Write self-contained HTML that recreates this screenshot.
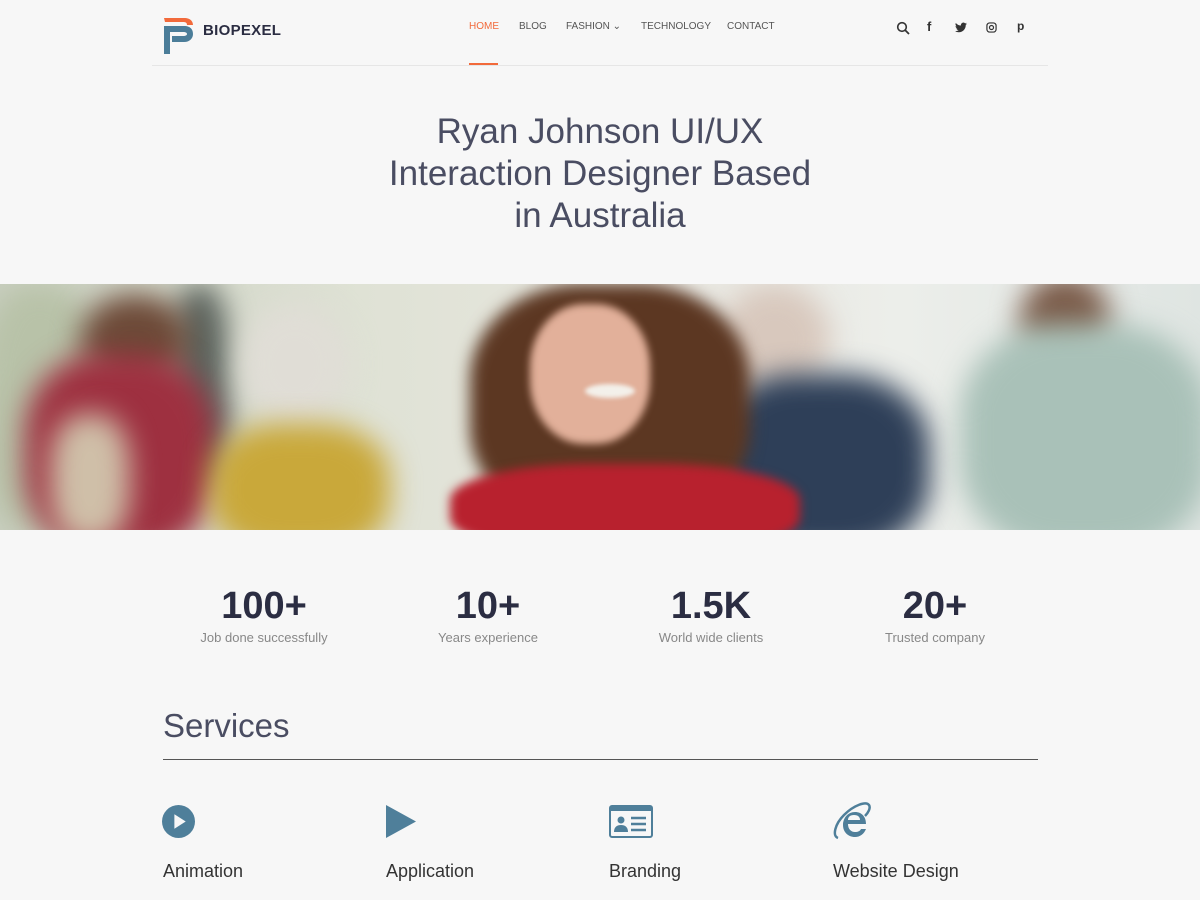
<!DOCTYPE html>
<html><head><meta charset="utf-8"><style>
*{margin:0;padding:0;box-sizing:border-box}
body{width:1200px;height:900px;background:#f7f7f7;font-family:"Liberation Sans",sans-serif;overflow:hidden;position:relative;color:#2b2d42}
.abs{position:absolute}
nav a{position:absolute;top:21px;font-size:10px;color:#555;text-decoration:none}
.hero{left:0;top:284px;width:1200px;height:246px;overflow:hidden;background:linear-gradient(90deg,#c9cfc0 0%,#dfe2d5 30%,#e8e6df 55%,#eceeea 75%,#dfe5e2 100%)}
.b{position:absolute;filter:blur(14px);border-radius:40%}
.stat{position:absolute;top:585px;width:220px;text-align:center}
.stat b{display:block;font-size:38px;color:#2b2d42;font-weight:bold}
.stat span{display:block;font-size:13px;color:#888;margin-top:2px}
.svc{position:absolute;top:861px;font-size:18px;color:#333}
</style></head><body>
<svg class="abs" style="left:162px;top:16px" width="34" height="38" viewBox="0 0 34 38"><path d="M2 2h20c7 0 9 4 9 7h-6c0-2-1-3-4-3H3z" fill="#f26a3b"/><path d="M2 10h20c7 0 9 4 9 8s-3 8-9 8h-12v-6h11c3 0 4-1 4-2s-1-2-4-2H8v22l-6 2z" fill="#4b7d99"/></svg>
<div class="abs" style="left:203px;top:22px;font-size:15px;font-weight:bold;color:#2b2d42;letter-spacing:.3px">BIOPEXEL</div>
<nav>
<a style="left:469px;color:#f26a3b">HOME</a>
<a style="left:519px">BLOG</a>
<a style="left:566px">FASHION ⌄</a>
<a style="left:641px">TECHNOLOGY</a>
<a style="left:727px">CONTACT</a>
</nav>
<div class="abs" style="left:469px;top:63px;width:29px;height:2px;background:#f26a3b"></div>
<div class="abs" style="left:152px;top:65px;width:896px;height:1px;background:#e6e6e6"></div>
<svg class="abs" style="left:896px;top:21px" width="14" height="14" viewBox="0 0 14 14"><circle cx="6" cy="6" r="4.3" stroke="#333" stroke-width="1.6" fill="none"/><path d="M9 9l4 4" stroke="#333" stroke-width="1.8"/></svg>
<div class="abs" style="left:927px;top:19px;font-size:13px;font-weight:bold;color:#333">f</div>
<svg class="abs" style="left:955px;top:22px" width="12" height="11" viewBox="0 0 24 20"><path d="M24 2.4c-.9.4-1.8.7-2.8.8 1-.6 1.8-1.6 2.2-2.7-1 .6-2 1-3.1 1.2A4.9 4.9 0 0 0 11.9 6 14 14 0 0 1 1.7.9a4.9 4.9 0 0 0 1.5 6.6c-.8 0-1.600-.3-2.2-.6 0 2.4 1.7 4.4 3.9 4.8-.7.2-1.5.2-2.2.1.6 2 2.4 3.4 4.6 3.4A9.9 9.9 0 0 1 0 17.2 14 14 0 0 0 7.5 19.4c9.1 0 14-7.5 14-14v-.6c1-.7 1.8-1.6 2.5-2.4z" fill="#333"/></svg>
<svg class="abs" style="left:986px;top:22px" width="11" height="11" viewBox="0 0 12 12"><rect x="1" y="1" width="10" height="10" rx="3" stroke="#333" stroke-width="1.3" fill="none"/><circle cx="6" cy="6" r="2.2" stroke="#333" stroke-width="1.3" fill="none"/></svg>
<div class="abs" style="left:1017px;top:19px;font-size:12px;font-weight:bold;color:#333">p</div>
<div class="abs" style="left:300px;top:111px;width:600px;text-align:center;font-size:35px;line-height:42px;color:#4a4d62">Ryan Johnson UI/UX<br>Interaction Designer Based<br>in Australia</div>
<div class="abs hero">
<div class="b" style="left:-20px;top:0;width:120px;height:246px;background:#b8c2a8"></div>
<div class="b" style="left:170px;top:0;width:60px;height:200px;background:#5e6660"></div>
<div class="b" style="left:80px;top:10px;width:110px;height:90px;background:#6d4a38;border-radius:50%"></div>
<div class="b" style="left:25px;top:70px;width:190px;height:200px;background:#9e3040"></div>
<div class="b" style="left:50px;top:130px;width:80px;height:130px;background:#cfbfa8"></div>
<div class="b" style="left:240px;top:20px;width:110px;height:120px;background:#e0ddd6;border-radius:50%"></div>
<div class="b" style="left:210px;top:140px;width:180px;height:130px;background:#c9a83a"></div>
<div class="b" style="left:720px;top:0;width:110px;height:110px;background:#d8c8bd;border-radius:50%"></div>
<div class="b" style="left:710px;top:90px;width:220px;height:180px;background:#2e3f58"></div>
<div class="b" style="left:1020px;top:-10px;width:90px;height:90px;background:#7a5a48;border-radius:50%"></div>
<div class="b" style="left:960px;top:40px;width:250px;height:230px;background:#a9c1b8"></div>
<div class="b" style="left:470px;top:0;width:280px;height:240px;background:#5c3722;filter:blur(8px)"></div>
<div class="b" style="left:530px;top:20px;width:120px;height:140px;background:#e2b09a;border-radius:45%;filter:blur(4px)"></div>
<div class="b" style="left:585px;top:100px;width:50px;height:14px;background:#f3f0ea;border-radius:50%;filter:blur(2px)"></div>
<div class="b" style="left:450px;top:180px;width:350px;height:90px;background:#b8212e;filter:blur(5px)"></div>
</div>
<div class="stat" style="left:154px"><b>100+</b><span>Job done successfully</span></div>
<div class="stat" style="left:378px"><b>10+</b><span>Years experience</span></div>
<div class="stat" style="left:601px"><b>1.5K</b><span>World wide clients</span></div>
<div class="stat" style="left:825px"><b>20+</b><span>Trusted company</span></div>
<div class="abs" style="left:163px;top:707px;font-size:33px;color:#4a4d62">Services</div>
<div class="abs" style="left:163px;top:759px;width:875px;height:1px;background:#555"></div>
<svg class="abs" style="left:162px;top:805px" width="33" height="33" viewBox="0 0 32 32"><circle cx="16" cy="16" r="16" fill="#4f7f9a"/><path d="M12 9l11 7-11 7z" fill="#f7f7f7"/></svg>
<svg class="abs" style="left:386px;top:805px" width="30" height="33" viewBox="0 0 30 33"><path d="M0 0l30 16.5L0 33z" fill="#4f7f9a"/></svg>
<svg class="abs" style="left:609px;top:805px" width="44" height="33" viewBox="0 0 44 33"><rect x="1" y="1" width="42" height="31" rx="2" fill="none" stroke="#4f7f9a" stroke-width="2"/><rect x="1" y="1" width="42" height="5" fill="#4f7f9a"/><circle cx="12" cy="15" r="3.5" fill="#4f7f9a"/><path d="M5 27c0-5 3-7 7-7s7 2 7 7z" fill="#4f7f9a"/><path d="M22 13h15M22 19h15M22 25h15" stroke="#4f7f9a" stroke-width="2.5"/></svg>
<svg class="abs" style="left:832px;top:802px" width="40" height="38" viewBox="0 0 40 38"><path d="M6 36C0 34 3 22 12 13 22 3 34-1 37 3c2 3-1 8-4 11" fill="none" stroke="#4f7f9a" stroke-width="2.5"/><path d="M34 22H16c0 5 3 8 7 8 3 0 5-1 6-3h5c-2 5-6 8-11 8-7 0-12-5-12-12S16 10 23 10s11 5 11 12zM16 18h12c0-3-2-5-6-5s-6 2-6 5z" fill="#4f7f9a"/></svg>
<div class="svc" style="left:163px">Animation</div>
<div class="svc" style="left:386px">Application</div>
<div class="svc" style="left:609px">Branding</div>
<div class="svc" style="left:833px">Website Design</div>
</body></html>
